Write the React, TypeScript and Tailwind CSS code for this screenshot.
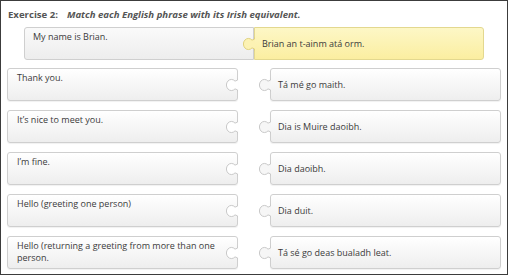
const pairs = [
  { en: 'Thank you.', ga: 'Tá mé go maith.' },
  { en: 'It’s nice to meet you.', ga: 'Dia is Muire daoibh.' },
  { en: 'I’m fine.', ga: 'Dia daoibh.' },
  { en: 'Hello (greeting one person)', ga: 'Dia duit.' },
  { en: 'Hello (returning a greeting from more than one person.', ga: 'Tá sé go deas bualadh leat.' },
];

// jigsaw tab / socket outline, the card edge sits at x=12
const Tab = ({ fill, stroke, className }: { fill: string; stroke: string; className: string }) => (
  <svg width="12" height="20" viewBox="0 0 12 18" preserveAspectRatio="none" className={className}>
    <path
      d="M12 2.5 Q12 5.5 9 5.5 A5 5 0 1 0 9 12.5 Q12 12.5 12 15.5"
      fill={fill}
      stroke={stroke}
      strokeWidth="1"
      vectorEffect="non-scaling-stroke"
    />
  </svg>
);

const card =
  'relative h-[33px] w-[231px] rounded-[3px] border border-[#cfcfcf] bg-gradient-to-b from-white to-[#eeeeee] text-[9px] leading-[11.5px] text-[#3b3b3b] shadow-[0_1px_1px_rgba(0,0,0,0.06)]';

export default function App() {
  return (
    <div
      className="flex h-[275px] w-[508px] flex-col border border-[#3c3c3c] bg-white"
      style={{ fontFamily: '"Open Sans", "Liberation Sans", sans-serif' }}
    >
      <div className="flex h-[26px] items-center pl-[7px] pt-[2px] text-[9.6px] font-bold text-[#555]">
        <span>Exercise 2:</span>
        <span className="ml-[9px] italic">Match each English phrase with its Irish equivalent.</span>
      </div>

      {/* matched pair */}
      <div className="flex justify-center">
        <div className="h-[33px] w-[230px] rounded-l-[3px] border border-[#cfcfcf] bg-gradient-to-b from-[#fafafa] to-[#ededed] pl-[8px] pt-[3px] text-[9px] leading-[11.5px] text-[#3b3b3b]">
          My name is Brian.
        </div>
        <div className="relative flex h-[33px] w-[230px] items-center rounded-r-[3px] border border-[#e3d88f] bg-gradient-to-b from-[#fdf7c6] to-[#fbeea0] pl-[7px] text-[9px] text-[#3b3b3b]">
          <Tab fill="#fcf2b3" stroke="#e0d27f" className="absolute left-[-12px] top-[6px]" />
          Brian an t-ainm atá orm.
        </div>
      </div>

      <div className="mt-[8px] flex flex-col gap-[9px] pl-[6px]">
        {pairs.map((p) => (
          <div key={p.en} className="flex gap-[32px]">
            <div className={`${card} pl-[9px] pr-[16px] pt-[3px]`}>
              {p.en}
              <Tab fill="#ffffff" stroke="#c9c9c9" className="absolute right-[-1px] top-[6px]" />
            </div>
            <div className={`${card} flex items-center pl-[7px]`}>
              <Tab fill="#f6f6f6" stroke="#c9c9c9" className="absolute left-[-12px] top-[6px]" />
              {p.ga}
            </div>
          </div>
        ))}
      </div>
    </div>
  );
}
